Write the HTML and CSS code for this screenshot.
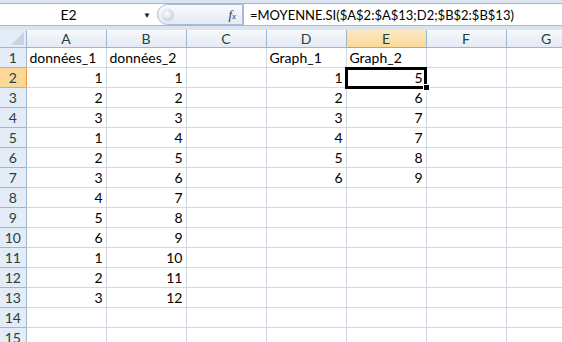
FILE: index.html
```html
<!DOCTYPE html>
<html lang="fr">
<head>
  <meta charset="UTF-8" />
  <title>Classeur1 - Excel</title>
  <link rel="stylesheet" href="styles.css">
</head>
<body>
  <div class="formula-bar">
    <div class="name-box">
      <span class="cell-ref">E2</span>
      <span class="drop">&#9660;</span>
    </div>
    <div class="fx-pill">
      <span class="knob"></span>
      <span class="fx"><i>f</i><small>x</small></span>
    </div>
    <div class="formula">=MOYENNE.SI($A$2:$A$13;D2;$B$2:$B$13)</div>
  </div>

  <table class="sheet">
    <colgroup>
      <col class="rh">
      <col><col><col><col><col><col><col>
    </colgroup>
    <thead>
      <tr>
        <th class="corner"><span></span></th>
        <th>A</th><th>B</th><th>C</th><th>D</th><th class="sel">E</th><th>F</th><th>G</th>
      </tr>
    </thead>
    <tbody>
      <tr><th>1</th><td class="txt">données_1</td><td class="txt">données_2</td><td></td><td class="txt">Graph_1</td><td class="txt">Graph_2</td><td></td><td></td></tr>
      <tr><th class="sel">2</th><td>1</td><td>1</td><td></td><td>1</td><td class="active">5</td><td></td><td></td></tr>
      <tr><th>3</th><td>2</td><td>2</td><td></td><td>2</td><td>6</td><td></td><td></td></tr>
      <tr><th>4</th><td>3</td><td>3</td><td></td><td>3</td><td>7</td><td></td><td></td></tr>
      <tr><th>5</th><td>1</td><td>4</td><td></td><td>4</td><td>7</td><td></td><td></td></tr>
      <tr><th>6</th><td>2</td><td>5</td><td></td><td>5</td><td>8</td><td></td><td></td></tr>
      <tr><th>7</th><td>3</td><td>6</td><td></td><td>6</td><td>9</td><td></td><td></td></tr>
      <tr><th>8</th><td>4</td><td>7</td><td></td><td></td><td></td><td></td><td></td></tr>
      <tr><th>9</th><td>5</td><td>8</td><td></td><td></td><td></td><td></td><td></td></tr>
      <tr><th>10</th><td>6</td><td>9</td><td></td><td></td><td></td><td></td><td></td></tr>
      <tr><th>11</th><td>1</td><td>10</td><td></td><td></td><td></td><td></td><td></td></tr>
      <tr><th>12</th><td>2</td><td>11</td><td></td><td></td><td></td><td></td><td></td></tr>
      <tr><th>13</th><td>3</td><td>12</td><td></td><td></td><td></td><td></td><td></td></tr>
      <tr><th>14</th><td></td><td></td><td></td><td></td><td></td><td></td><td></td></tr>
      <tr><th>15</th><td></td><td></td><td></td><td></td><td></td><td></td><td></td></tr>
    </tbody>
  </table>
</body>
</html>
```

FILE: styles.css
```css
html, body {
  margin: 0;
  padding: 0;
  width: 562px;
  height: 342px;
  overflow: hidden;
  background: #dbe5f1;
  font-family: Lato, "Liberation Sans", sans-serif;
  font-size: 14px;
  color: #000;
}
.formula-bar {
  display: flex;
  align-items: center;
  height: 23px;
  margin-top: 3px;
  background: #fff;
  border-top: 1px solid #a5b8d0;
  border-bottom: 1px solid #a5b8d0;
  box-sizing: border-box;
}
.name-box {
  width: 157px;
  display: flex;
  align-items: center;
  height: 100%;
}
.cell-ref {
  flex: 1;
  text-align: center;
  padding-right: 6px;
}
.drop {
  font-size: 8px;
  color: #222;
  margin-right: 6px;
}
.fx-pill {
  width: 86px;
  height: 21px;
  box-sizing: border-box;
  border: 1px solid #a9bcd3;
  border-radius: 11px 0 0 11px;
  background: linear-gradient(#f8fafd, #e3eaf4);
  display: flex;
  align-items: center;
  justify-content: space-between;
  padding: 0 6px 0 4px;
}
.knob {
  width: 12px;
  height: 12px;
  border-radius: 50%;
  background: radial-gradient(circle at 40% 40%, #fff, #c9d3de 70%, #b4c0cd);
}
.fx {
  font-family: "Liberation Serif", serif;
  font-size: 13px;
  color: #333;
}
.fx small {
  font-size: 9px;
  font-style: italic;
}
.formula {
  flex: 1;
  border-left: 1px solid #a5b8d0;
  height: 100%;
  padding-left: 6px;
  display: flex;
  align-items: center;
  white-space: nowrap;
  font-size: 13px;
}
.sheet {
  margin-top: 4px;
  border-collapse: collapse;
  table-layout: fixed;
  width: 586px;
  background: #fff;
}
.sheet col {
  width: 80px;
}
.sheet col.rh {
  width: 26px;
}
.sheet thead th {
  height: 17px;
  padding: 0;
  font-weight: normal;
  color: #27413e;
  background: linear-gradient(#f6f8fb, #e4eaf3);
  border-right: 1px solid #9eb6ce;
  border-bottom: 1px solid #9eb6ce;
}
.sheet thead th.sel {
  background: linear-gradient(#fde8c0, #f9d99b);
  border-bottom: 1px solid #f29536;
}
.sheet thead th.corner {
  position: relative;
  background: #e4ecf7;
}
.corner span {
  position: absolute;
  right: 2px;
  bottom: 2px;
  width: 0;
  height: 0;
  border-left: 13px solid transparent;
  border-bottom: 13px solid #c5d3e4;
}
.sheet tbody th {
  height: 19px;
  padding: 0;
  font-weight: normal;
  color: #27413e;
  background: #e4ecf7;
  border-right: 1px solid #9eb6ce;
  border-bottom: 1px solid #9eb6ce;
  text-align: center;
}
.sheet tbody th.sel {
  background: #fbd89a;
  border-right: 1px solid #f29536;
}
.sheet td {
  height: 19px;
  padding: 0 3px;
  text-align: right;
  border-right: 1px solid #d0d7e5;
  border-bottom: 1px solid #d0d7e5;
  white-space: nowrap;
}
.sheet td.txt {
  text-align: left;
}
.sheet td.active {
  position: relative;
  outline: 3px solid #000;
  outline-offset: -2px;
}
.sheet td.active::after {
  content: "";
  position: absolute;
  right: -4px;
  bottom: -4px;
  width: 5px;
  height: 5px;
  background: #000;
  border: 1px solid #fff;
}
```
